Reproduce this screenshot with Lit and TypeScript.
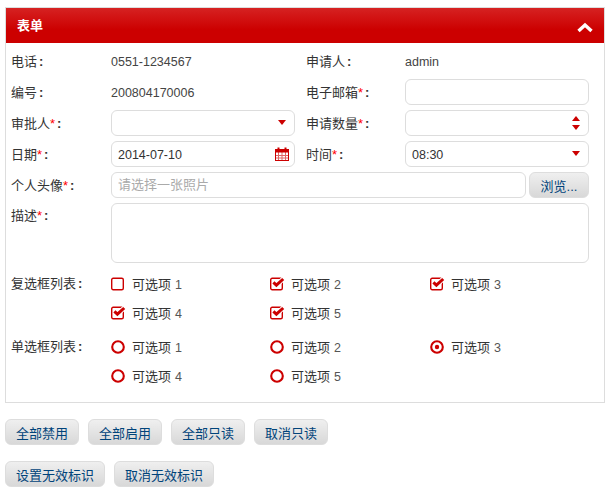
import { LitElement, html, css, svg } from "lit";
import { customElement } from "lit/decorators.js";

const tri = (dir: "down" | "up") =>
  svg`<polygon points=${dir === "down" ? "0,0 8,0 4,5" : "4,0 8,5 0,5"} fill="#cc0000"></polygon>`;

@customElement("app-root")
export class AppRoot extends LitElement {
  static styles = css`
    :host {
      display: block;
      box-sizing: border-box;
      width: 611px;
      height: 495px;
      padding: 7px 6px 0 5px;
      font: 12.5px "Liberation Sans", "Noto Sans CJK SC", sans-serif;
      color: #333;
      background: #fff;
    }
    .panel { border: 1px solid #ddd; height: 396px; box-sizing: border-box; }
    .head {
      height: 35px;
      display: flex;
      align-items: center;
      justify-content: space-between;
      padding: 0 11px;
      color: #fff;
      font-weight: bold;
      font-size: 13px;
      background: linear-gradient(#d62222, #cc0000 62%);
    }
    .head span { margin-bottom: 2px; }
    .head svg { display: block; margin-top: 3px; }
    .form {
      display: grid;
      grid-template-columns: 100px 184px 11px 99px 184px;
      grid-template-rows: repeat(5, 26px) 60px;
      row-gap: 5px;
      padding: 5px 15px 0 5px;
      align-items: center;
    }
    .l { white-space: nowrap; font-size: 13px; margin-bottom: 2px; }
    .l2 { grid-column: 4; }
    .f2 { grid-column: 5; }
    .s { color: #f00; font-family: "Liberation Sans", sans-serif; }
    .c { font-weight: bold; margin-left: 2px; font-family: "Liberation Sans", sans-serif; }
    .val { color: #444; margin-top: 2px; }
    .box {
      box-sizing: border-box;
      height: 26px;
      border: 1px solid #ddd;
      border-radius: 6px;
      display: flex;
      align-items: center;
      padding: 0 6px;
      justify-content: space-between;
      color: #333;
      background: #fff;
    }
    .box input {
      flex: 1;
      min-width: 0;
      border: 0;
      padding: 0;
      outline: 0;
      font: inherit;
      color: #333;
      background: transparent;
    }
    .box input.low { padding-top: 2px; }
    .box input::placeholder { color: #aaa; opacity: 1; font-size: 13px; }
    .box svg { display: block; flex: none; }
    .arrow { margin-right: 2px; margin-top: -1px; }
    .spin { margin-right: 2px; }
    .cal { margin-right: -1px; }
    .filerow { grid-column: 2 / 6; display: flex; gap: 3px; }
    .filerow .box { flex: 1; }
    .browse { width: 60px; padding: 0; }
    .desc-label { align-self: start; margin-top: 2px; }
    textarea {
      grid-column: 2 / 6;
      box-sizing: border-box;
      height: 60px;
      border: 1px solid #ddd;
      border-radius: 6px;
      resize: none;
      outline: 0;
      display: block;
      font: inherit;
    }
    .groups { padding: 6px 0 0 5px; display: flex; flex-direction: column; gap: 5px; }
    .group { display: flex; }
    .glabel { width: 100px; flex: none; font-size: 13px; line-height: 29px; white-space: nowrap; }
    .opts {
      display: grid;
      grid-template-columns: 159px 160px 159px;
      grid-auto-rows: 29px;
    }
    .opt { display: flex; align-items: center; gap: 6px; font-size: 13px; color: #333; }
    .opt svg { display: block; flex: none; }
    .opt b { font-weight: normal; font-size: 12.5px; color: #555; margin-left: 4px; }
    .btns { display: flex; gap: 9px; margin-top: 16px; }
    button {
      box-sizing: border-box;
      height: 26px;
      padding: 0 10px;
      border: 1px solid #ddd;
      border-radius: 6px;
      font: 13px "Liberation Sans", "Noto Sans CJK SC", sans-serif;
      color: #00437a;
      background: linear-gradient(#efefef, #d8d8d8);
      white-space: nowrap;
    }
  `;

  private label(t: string, req = false) {
    return html`${t}${req ? html`<span class="s">*</span>` : ""}<span class="c">:</span>`;
  }

  private check(on: boolean) {
    return html`<svg width="15" height="14" viewBox="0 0 15 14">
      <rect x="0.7" y="1.2" width="11.6" height="11.6" rx="1.5" fill="none" stroke="#cc0000" stroke-width="1.4"></rect>
      ${on
        ? svg`<path d="M3.4 5.4 L6.4 8.2 L13.4 1.8" fill="none" stroke="#fff" stroke-width="4.8"></path>
               <path d="M3.4 5.4 L6.4 8.2 L13.2 2" fill="none" stroke="#cc0000" stroke-width="3"></path>`
        : ""}
    </svg>`;
  }

  private radio(on: boolean) {
    return html`<svg width="15" height="14" viewBox="0 0 15 14">
      <circle cx="7" cy="7" r="5.8" fill="none" stroke="#cc0000" stroke-width="2.1"></circle>
      ${on ? svg`<circle cx="7" cy="7" r="2.2" fill="#cc0000"></circle>` : ""}
    </svg>`;
  }

  private opt(icon: unknown, n: number) {
    return html`<label class="opt">${icon}<span>可选项<b>${n}</b></span></label>`;
  }

  render() {
    const checks = [false, true, true, true, true];
    const radios = [false, false, true, false, false];
    return html`
      <div class="panel">
        <div class="head">
          <span>表单</span>
          <svg width="16" height="11" viewBox="0 0 16 11">
            <path d="M1.5 9 L8 3 L14.5 9" fill="none" stroke="#fff" stroke-width="3.4"></path>
          </svg>
        </div>
        <div class="form">
          <div class="l">${this.label("电话")}</div>
          <div class="val">0551-1234567</div>
          <div class="l l2">${this.label("申请人")}</div>
          <div class="val f2">admin</div>

          <div class="l">${this.label("编号")}</div>
          <div class="val">200804170006</div>
          <div class="l l2">${this.label("电子邮箱", true)}</div>
          <div class="box f2"><input /></div>

          <div class="l">${this.label("审批人", true)}</div>
          <div class="box"><input /><svg class="arrow" width="8" height="5">${tri("down")}</svg></div>
          <div class="l l2">${this.label("申请数量", true)}</div>
          <div class="box f2">
            <input />
            <svg class="spin" width="8" height="15">
              <g>${tri("up")}</g>
              <g transform="translate(0,9)">${tri("down")}</g>
            </svg>
          </div>

          <div class="l">${this.label("日期", true)}</div>
          <div class="box">
            <input class="low" value="2014-07-10" />
            <svg class="cal" width="14" height="14" viewBox="0 0 14 14">
              <rect x="0.5" y="2.5" width="13" height="11" fill="#fff" stroke="#cc0000"></rect>
              <rect x="0" y="2" width="14" height="3.5" fill="#cc0000"></rect>
              <path d="M3.5 0.5V3 M10.5 0.5V3" stroke="#cc0000" stroke-width="2"></path>
              <path d="M0 8.5H14 M0 11H14 M3.5 5V14 M7 5V14 M10.5 5V14" stroke="#cc0000" stroke-width="1" opacity="0.6"></path>
            </svg>
          </div>
          <div class="l l2">${this.label("时间", true)}</div>
          <div class="box f2"><input class="low" value="08:30" /><svg class="arrow" width="8" height="5">${tri("down")}</svg></div>

          <div class="l">${this.label("个人头像", true)}</div>
          <div class="filerow">
            <div class="box"><input placeholder="请选择一张照片" /></div>
            <button class="browse">浏览...</button>
          </div>

          <div class="l desc-label">${this.label("描述", true)}</div>
          <textarea></textarea>
        </div>
        <div class="groups">
          <div class="group">
            <div class="glabel">${this.label("复选框列表")}</div>
            <div class="opts">${checks.map((c, i) => this.opt(this.check(c), i + 1))}</div>
          </div>
          <div class="group">
            <div class="glabel">${this.label("单选框列表")}</div>
            <div class="opts">${radios.map((c, i) => this.opt(this.radio(c), i + 1))}</div>
          </div>
        </div>
      </div>
      <div class="btns">
        <button>全部禁用</button><button>全部启用</button><button>全部只读</button><button>取消只读</button>
      </div>
      <div class="btns">
        <button>设置无效标识</button><button>取消无效标识</button>
      </div>
    `;
  }
}
